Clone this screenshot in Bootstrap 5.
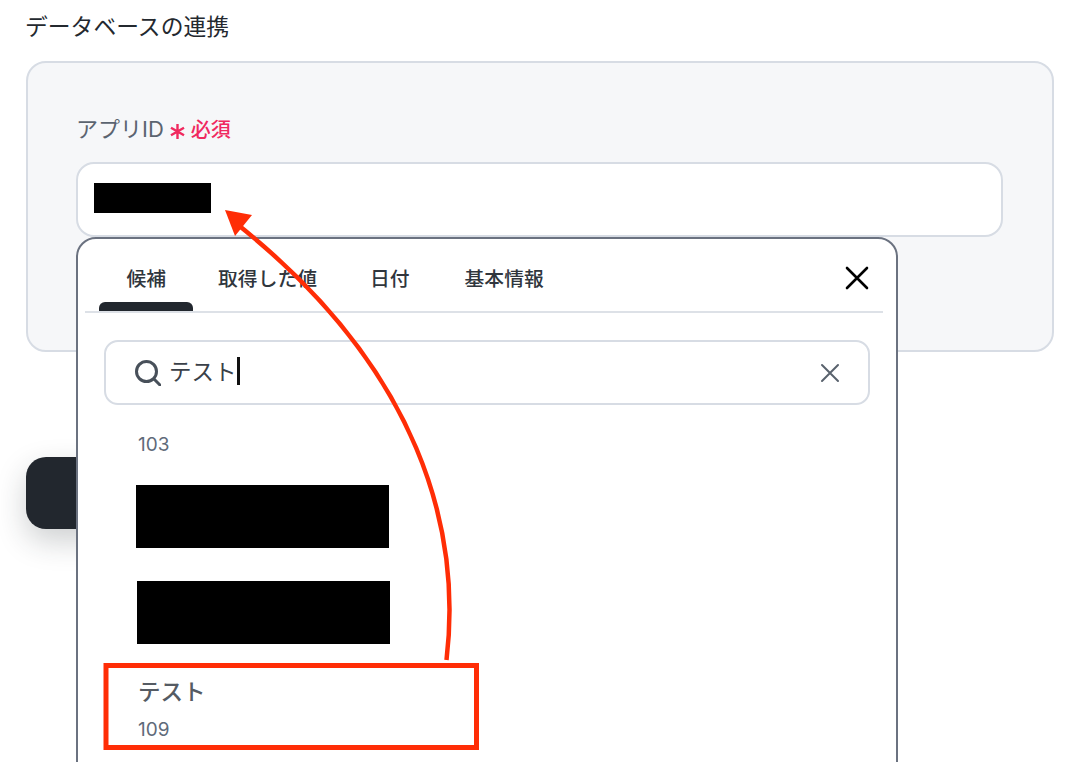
<!DOCTYPE html>
<html lang="ja">
<head>
    <meta charset="UTF-8">
    <title>データベースの連携</title>
    <link href="https://cdn.jsdelivr.net/npm/bootstrap@5.3.0/dist/css/bootstrap.min.css" rel="stylesheet">
    <style>
        html, body { height: 762px; overflow: hidden; }
        body {
            font-family: Inter, "Noto Sans CJK JP", sans-serif;
            color: #24292f;
            background: #fff;
            position: relative;
        }
        .page-wrap { padding: 11px 20px 0 26px; position: relative; height: 762px; }
        .page-title { font-size: 22.8px; line-height: 32px; margin: 0 0 18px -1px; font-weight: 400; }
        .form-panel {
            height: 291px;
            padding: 51px 49px 0 48px;
            background: #f6f7f9;
            border: 2px solid #d7dce4;
            border-radius: 20px;
        }
        .field-label { font-size: 22px; line-height: 30px; color: #5b6470; margin-bottom: 17px; }
        .required-mark { color: #f0295f; font-size: 20px; font-weight: 500; }
        .required-star { margin: 0 6px 0 6px; }
        .value-box {
            height: 75px;
            background: #fff;
            border: 2px solid #d7dce4;
            border-radius: 18px;
            padding: 19px 16px;
        }
        .redact { background: #000; }
        .redact-short { width: 117px; height: 30px; }
        .redact-long { width: 253px; height: 63px; margin-left: -2px; }
        .redact-first { margin-top: 27px; }
        .redact-second { margin: 33px 0 0 -1px; }
        .submit-dark {
            width: 300px;
            height: 72px;
            margin-top: 105px;
            background: #22272e;
            border-radius: 20px;
            box-shadow: 0 12px 30px rgba(34, 39, 46, .22);
        }
        .picker {
            position: absolute;
            left: 76px;
            top: 237px;
            width: 822px;
            height: 560px;
            background: #fff;
            border: 2px solid #6b7280;
            border-radius: 20px 20px 0 0;
            padding: 0 13px 0 7px;
        }
        .picker-tabs {
            height: 74px;
            border-bottom: 2px solid #dde1e7;
            padding-left: 14px;
        }
        .picker-tab {
            padding: 26px 27.5px 0;
            font-size: 19.8px;
            line-height: 28px;
            font-weight: 500;
            color: #30363d;
            position: relative;
        }
        .picker-tab:nth-child(2) { margin-left: -3px; }
        .picker-tab:nth-child(3) { margin-left: -2px; }
        .picker-tab.is-active::after {
            content: "";
            position: absolute;
            left: 0;
            right: 1px;
            top: 63px;
            height: 9px;
            background: #22272e;
            border-radius: 6px 6px 0 0;
        }
        .picker-close { margin: 27px 14px 0 auto; display: block; }
        .picker-search {
            height: 65px;
            margin: 27px 13px 0 19px;
            border: 2px solid #d7dce4;
            border-radius: 14px;
            padding: 0 28px 0 28px;
        }
        .search-text { font-size: 22.5px; line-height: 32px; color: #3a4048; margin: 0 0 2px 8px; }
        .search-caret { width: 3px; height: 28px; background: #111; margin-bottom: 3px; }
        .option-list { padding: 27px 0 0 53px; }
        .option-code { font-size: 19px; line-height: 26px; color: #5f6b7a; }
        .option-name { font-size: 22.5px; line-height: 32px; color: #555b63; font-weight: 500; margin-top: 32px; }
        .option-name + .option-code { margin-top: 9px; }
        .annotation { position: absolute; left: 0; top: 0; }
    </style>
</head>
<body>
    <div class="page-wrap">
        <h1 class="page-title">データベースの連携</h1>
        <div class="form-panel">
            <div class="field-label">アプリID<span class="required-mark"><svg class="required-star" width="15" height="15" viewBox="0 0 15 15" fill="none" stroke="#f0295f" stroke-width="2.4"><path d="M7.5 0V15M1 3.75 14 11.25M14 3.75 1 11.25"/></svg>必須</span></div>
            <div class="value-box">
                <div class="redact redact-short"></div>
            </div>
        </div>
        <div class="submit-dark"></div>

        <div class="picker">
            <div class="picker-tabs d-flex">
                <div class="picker-tab is-active">候補</div>
                <div class="picker-tab">取得した値</div>
                <div class="picker-tab">日付</div>
                <div class="picker-tab">基本情報</div>
                <svg class="picker-close" width="24" height="24" viewBox="0 0 24 24" fill="none" stroke="#000" stroke-width="2.6" stroke-linecap="round">
                    <path d="M2 2 22 22M22 2 2 22"/>
                </svg>
            </div>
            <div class="picker-search d-flex align-items-center">
                <svg width="27" height="27" viewBox="0 0 27 27" fill="none" stroke="#48505a" stroke-width="3" stroke-linecap="round">
                    <circle cx="12.5" cy="12.5" r="10"/>
                    <path d="M20 20 26 26"/>
                </svg>
                <span class="search-text">テスト</span>
                <span class="search-caret"></span>
                <svg class="ms-auto" width="20" height="20" viewBox="0 0 20 20" fill="none" stroke="#59626d" stroke-width="2" stroke-linecap="round">
                    <path d="M2 2 18 18M18 2 2 18"/>
                </svg>
            </div>
            <div class="option-list">
                <div class="option-code">103</div>
                <div class="redact redact-long redact-first"></div>
                <div class="redact redact-long redact-second"></div>
                <div class="option-name">テスト</div>
                <div class="option-code">109</div>
            </div>
        </div>
    </div>

    <svg class="annotation" width="1074" height="762" viewBox="0 0 1074 762" fill="none">
        <rect x="106" y="665.5" width="370.5" height="82" stroke="#ff2d06" stroke-width="5"/>
        <path d="M446.5 660 C462 530 420 370 237 224" stroke="#ff2d06" stroke-width="4.5"/>
        <path d="M225 210 L252 215 L235 236 Z" fill="#ff2d06"/>
    </svg>
</body>
</html>
